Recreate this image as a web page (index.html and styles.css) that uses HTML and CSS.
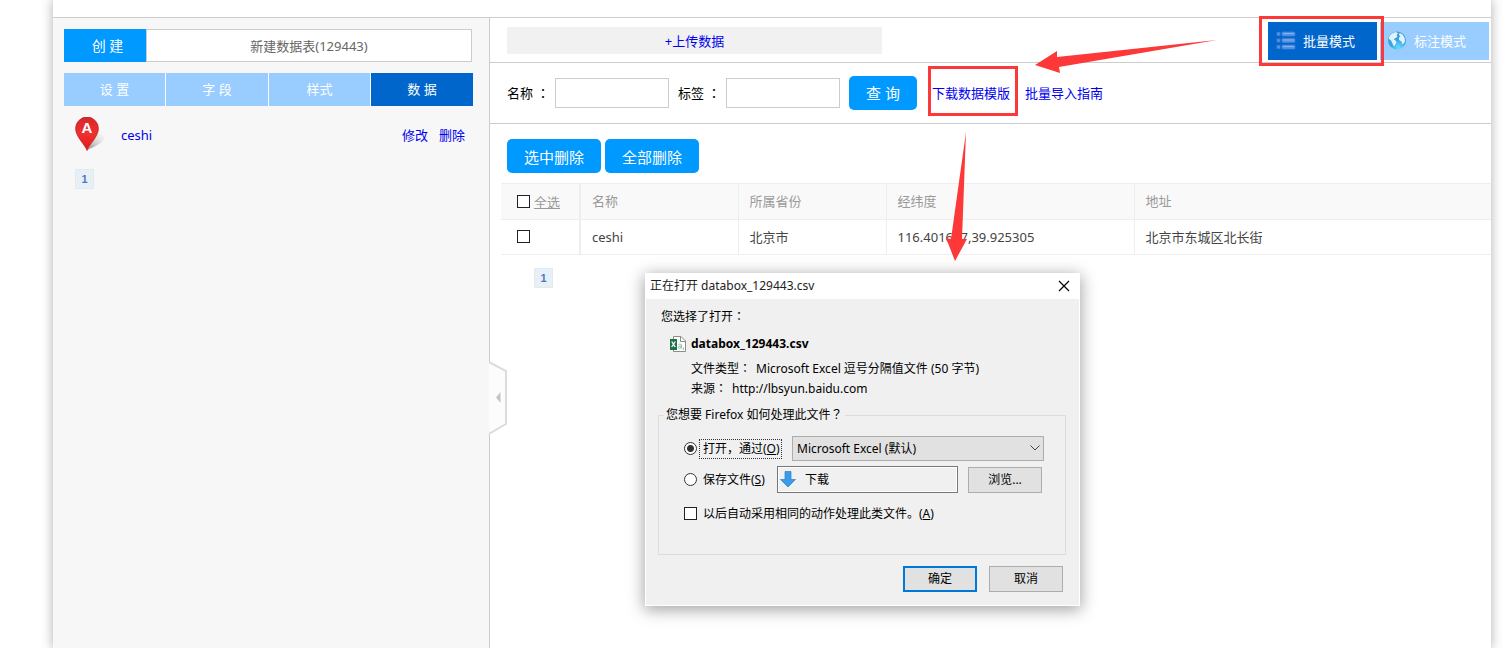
FILE: index.html
```html
<!DOCTYPE html>
<html lang="zh-CN">
<head>
<meta charset="utf-8">
<title>数据管理</title>
<link rel="stylesheet" href="styles.css">
</head>
<body>
<div class="page">
  <aside class="sidebar">
    <div class="create-row">
      <button class="create" type="button">创 建</button>
      <button class="table-name" type="button">新建数据表(129443)</button>
    </div>
    <nav class="tabs">
      <button class="tab" type="button">设 置</button>
      <button class="tab" type="button">字 段</button>
      <button class="tab" type="button">样式</button>
      <button class="tab active" type="button">数 据</button>
    </nav>
    <div class="poi">
      <svg class="marker" width="32" height="36" viewBox="0 0 32 36">
        <defs>
          <linearGradient id="pin" x1="0" y1="0" x2="0" y2="1"><stop offset="0" stop-color="#d8262a"/><stop offset=".5" stop-color="#f03030"/><stop offset="1" stop-color="#e01818"/></linearGradient>
          <linearGradient id="shade" x1="0" y1="1" x2="1" y2="0"><stop offset="0" stop-color="#888"/><stop offset="1" stop-color="#eee" stop-opacity=".2"/></linearGradient>
        </defs>
        <path d="M12 33 L23 17 Q29 17 29 22 Q27 27 12 33Z" fill="url(#shade)"/>
        <path d="M12 33.500C10.500 28 .6 20 .6 11.500a11.400 11.400 0 0 1 22.800 0C23.400 20 13.500 28 12 33.500Z" fill="url(#pin)" stroke="#b81c1c" stroke-width=".7"/>
        <text class="marker-letter" x="12" y="16" text-anchor="middle">A</text>
      </svg>
      <a class="poi-name" href="#">ceshi</a>
      <a href="#">修改</a>
      <a href="#">删除</a>
    </div>
    <a class="pager" href="#">1</a>
  </aside>

  <main class="main">
    <button class="handle" type="button" aria-label="收起">
      <svg width="18" height="76" viewBox="0 0 18 76"><path d="M0 2 L17 11 V64 L0 74" fill="#fcfcfc" stroke="#dcdcdc" stroke-width="2"/><path d="M11.500 32V43L7 37.500Z" fill="#c4c4c4"/></svg>
    </button>

    <header class="topbar">
      <a class="upload" href="#">+上传数据</a>
      <div class="modes">
        <button class="mode current" type="button">
          <svg width="20" height="20" viewBox="0 0 20 20">
            <g fill="#5795e4" stroke="#3f80d6" stroke-width=".8"><rect x="1" y="1.500" width="3" height="3"/><rect x="1" y="8" width="3" height="3"/><rect x="1" y="14.500" width="3" height="3"/><rect x="6" y="1" width="13" height="4" rx="1"/><rect x="6" y="7.500" width="13" height="4" rx="1"/><rect x="6" y="14" width="13" height="4" rx="1"/></g>
            <path d="M7 2.500H18M7 9H18M7 15.500H18" stroke="#7db2f0"/>
          </svg>
          批量模式
          <span class="mark mode-mark"></span>
        </button>
        <button class="mode" type="button">
          <svg width="20" height="20" viewBox="0 0 20 20">
            <defs><radialGradient id="globe" cx=".6" cy=".9" r=".9"><stop offset="0" stop-color="#6adcff"/><stop offset=".5" stop-color="#35a5e0"/><stop offset="1" stop-color="#4a9bd2"/></radialGradient></defs>
            <circle cx="10" cy="9.500" r="9" fill="url(#globe)"/>
            <path d="M2 6Q4 2 9 1L11 2.500L9.500 4L10.500 5.500L8 7.500L6.500 8L9 10L9.500 11.500L8 14L7 15.500L5.500 12.500L4 9.500L2 8Z M12.500 2L15.500 3.500Q18.500 7 18 10.500L16.500 12.500L15.500 13.500L14.500 10.500L12 9L12 6.500L13.500 5.500L12 4Z" fill="#e2f3fd"/>
          </svg>
          标注模式
        </button>
      </div>
    </header>

    <form class="search">
      <label for="name">名称 <span class="colon" lang="zh-TW">：</span></label>
      <input id="name" class="field" type="text">
      <label for="tag">标签 <span class="colon" lang="zh-TW">：</span></label>
      <input id="tag" class="field" type="text">
      <button class="btn query" type="button">查 询</button>
      <a class="template" href="#">下载数据模版<span class="mark link-mark"></span></a>
      <a href="#">批量导入指南</a>
    </form>

    <div class="actions">
      <button class="btn" type="button">选中删除</button>
      <button class="btn" type="button">全部删除</button>
    </div>

    <table class="grid">
      <colgroup><col class="c-check"><col class="c-name"><col class="c-prov"><col class="c-coord"><col></colgroup>
      <thead>
        <tr><th><label class="all"><input class="check" type="checkbox"><u>全选</u></label></th><th>名称</th><th>所属省份</th><th>经纬度</th><th>地址</th></tr>
      </thead>
      <tbody>
        <tr><td><input class="check" type="checkbox" aria-label="选择 ceshi"></td><td>ceshi</td><td>北京市</td><td>116.401677,39.925305</td><td>北京市东城区北长街</td></tr>
      </tbody>
    </table>
    <a class="pager grid-pager" href="#">1</a>
  </main>

  <section class="dialog" role="dialog" aria-labelledby="dialog-title">
    <div class="titlebar">
      <span id="dialog-title">正在打开 databox_129443.csv</span>
      <button class="close" type="button" aria-label="关闭"><svg width="12" height="12" viewBox="0 0 12 12"><path d="M1 1L11 11M11 1L1 11" stroke="#000" stroke-width="1.200"/></svg></button>
    </div>
    <div class="dialog-body">
      <p class="intro">您选择了打开<span class="colon" lang="zh-TW">：</span></p>
      <div class="file">
        <svg width="16" height="16" viewBox="0 0 16 16">
          <path d="M3.500.5H11L15.500 5V15.500H3.500Z" fill="#fff" stroke="#8c8c8c"/><path d="M10.500.5V5.500H15.500" fill="none" stroke="#8c8c8c"/>
          <rect y="3" width="7" height="11" fill="#1e7145"/><path d="M1.700 5.500L5.300 11M5.300 5.500L1.700 11" stroke="#fff" stroke-width="1.300"/>
          <path d="M8.500 8.500Q11.500 7 11.500 10V12.500M11.500 10Q8 10 8.300 11.500Q9 13.300 11.500 11.500M13.500 11.500V13L12.800 14" fill="none" stroke="#8abf9e"/>
        </svg>
        <strong>databox_129443.csv</strong>
      </div>
      <dl class="facts">
        <div><dt>文件类型<span class="colon" lang="zh-TW">：</span></dt><dd>Microsoft Excel 逗号分隔值文件 (50 字节)</dd></div>
        <div><dt>来源<span class="colon" lang="zh-TW">：</span></dt><dd>http://lbsyun.baidu.com</dd></div>
      </dl>
      <fieldset class="choices">
        <legend>您想要 Firefox 如何处理此文件<span class="colon" lang="zh-TW">？</span></legend>
        <div class="choice">
          <input class="radio" id="open" type="radio" name="act" checked>
          <label class="focus" for="open">打开，通过(<u>O</u>)</label>
          <span class="select-wrap">
            <select class="app" aria-label="打开程序"><option>Microsoft Excel (默认)</option></select>
            <svg class="chevron" width="10" height="6" viewBox="0 0 10 6"><path d="M.5.5L5 5L9.500.5" fill="none" stroke="#444"/></svg>
          </span>
        </div>
        <div class="choice">
          <input class="radio" id="save" type="radio" name="act">
          <label class="save-label" for="save">保存文件(<u>S</u>)</label>
          <span class="folder">
            <svg width="16" height="17" viewBox="0 0 16 17"><path d="M5 .5H11V8.500H15.500L8 16L.5 8.500H5Z" fill="#3a9bea" stroke="#2a7fc4" stroke-width=".7"/></svg>
            下载
          </span>
          <button class="sys browse" type="button">浏览...</button>
        </div>
        <div class="choice">
          <input class="check" id="auto" type="checkbox">
          <label class="auto-label" for="auto">以后自动采用相同的动作处理此类文件。(<u>A</u>)</label>
        </div>
      </fieldset>
      <div class="dialog-actions">
        <button class="sys default" type="button">确定</button>
        <button class="sys" type="button">取消</button>
      </div>
    </div>
  </section>
</div>
<svg class="arrows" width="1240" height="280" viewBox="0 0 1240 280">
  <path d="M1217 40L1057 57V51L1035 65L1060 73L1059 67Z M966 132L951 239L946 238L955 261L967 239H962Z" fill="#fc3838"/>
</svg>
</body>
</html>
```
FILE: styles.css
```css
* { box-sizing: border-box; }
body {
  margin: 0;
  overflow: hidden;
  background: #fff;
  color: #000;
  font: 13px/20px "Noto Sans", "Noto Sans CJK SC", sans-serif;
}
button, input, select { font: inherit; color: inherit; margin: 0; border-radius: 0; }
button { padding: 0; border: 0; white-space: nowrap; }
a { color: #00e; text-decoration: none; }
svg { flex: none; display: block; }
.colon { font-family: "Noto Sans CJK TC", sans-serif; line-height: 1; }

.page {
  display: flex;
  min-height: 100vh;
  margin: 0 18px 0 53px;
  padding-top: 17px;
  background: #fff;
  box-shadow: 0 0 10px 1px #bbb;
}

/* sidebar */
.sidebar {
  flex: none;
  width: 437px;
  padding: 11px 16px 0 11px;
  background: #f7f7f7;
  border-top: 1px solid #ccc;
  border-right: 1px solid #ccc;
}
.create-row { display: flex; height: 33px; margin-right: 1px; }
.create { width: 82px; padding-left: 5px; background: #09f; color: #fff; font-size: 14px; }
.table-name { flex: 1; padding-top: 1px; background: #fff; border: 1px solid #ccc; color: #666; }
.tabs { display: grid; grid-template-columns: 101px 102px 101px 1fr; gap: 1px; height: 33px; margin-top: 11px; background: #fff; }
.tab { padding-bottom: 2px; background: #9cf; color: #fff; }
.tab.active { background: #06c; }
.poi { display: flex; align-items: center; gap: 11px; margin: 10px 8px 16px 11px; height: 37px; }
.poi-name { flex: 1; margin-left: 3px; }
.marker-letter { font: bold 15px "Liberation Sans", sans-serif; fill: #fff; }
.pager {
  display: block;
  width: 19px;
  height: 20px;
  margin-left: 11px;
  background: #e8f0f7;
  border: 1px solid #e2e9ef;
  color: #5176c0;
  font: bold 11px/18px "Liberation Sans", sans-serif;
  text-align: center;
}

/* main column */
.main { position: relative; flex: 1; min-width: 0; border-top: 1px solid #ccc; }
.handle { position: absolute; left: -1px; top: 342px; background: none; }
.topbar { display: flex; justify-content: space-between; height: 45px; padding: 4px 2px 2px 17px; border-bottom: 1px solid #ccc; }
.upload { width: 375px; height: 27px; margin-top: 5px; background: #f1f1f1; line-height: 28px; text-align: center; }
.modes { display: flex; gap: 3px; }
.mode { position: relative; display: flex; align-items: center; gap: 7px; width: 109px; height: 38px; padding-left: 8px; background: #9cf; color: #fff; }
.mode + .mode { padding-left: 7px; }
.mode.current { background: #06c; }
.mark { position: absolute; border: 3px solid #fc3838; z-index: 1; }
.mode-mark { inset: -6px -7px -6px -9px; }
.link-mark { inset: -17px -8px -13px -4px; }
.search { display: flex; align-items: center; height: 61px; padding-left: 17px; border-bottom: 1px solid #ccc; }
.search label { width: 48px; white-space: nowrap; }
.field { width: 114px; height: 30px; margin-right: 9px; border: 1px solid #ccc; background: #fff; }
.btn { height: 34px; padding: 2px 0 0; width: 94px; border-radius: 5px; background: #09f; color: #fff; font-size: 15px; }
.query { width: 68px; padding: 0; margin-right: 15px; }
.template { position: relative; margin-right: 15px; }
.actions { display: flex; gap: 4px; padding: 15px 17px 10px; }

.grid { width: calc(100% - 11px); margin-left: 11px; border-collapse: collapse; table-layout: fixed; }
.grid th, .grid td { height: 35px; padding: 0 11px 1px; border: 1px solid #eee; border-width: 1px 0 1px 1px; text-align: left; font-weight: 400; color: #444; }
.grid th { height: 36px; background: #f9f9f9; color: #999; }
.grid th:first-child, .grid td:first-child { padding-left: 16px; border-left: 0; border-right: 2px solid #eee; }
.c-check { width: 79px; }
.c-name { width: 158px; }
.c-prov { width: 148px; }
.c-coord { width: 248px; }
.all { display: flex; align-items: center; gap: 4px; }
.all u { padding-top: 2px; }
.check { appearance: none; flex: none; display: block; width: 13px; height: 13px; border: 1px solid #222; background: #fff; }
.grid-pager { margin: 13px 0 0 44px; }

/* download dialog */
.dialog {
  position: absolute;
  left: 645px;
  top: 273px;
  width: 435px;
  border: 1px solid #fff;
  background: #f0f0f0;
  box-shadow: 0 3px 15px 1px rgba(0, 0, 0, .36);
  font-size: 12px;
  line-height: 18px;
}
.titlebar { display: flex; align-items: center; justify-content: space-between; height: 25px; padding: 0 9px 1px 4px; background: #fff; color: #222; }
.close { background: none; }
.dialog-body { padding: 9px 13px 13px 12px; }
.intro { margin: 0 0 9px 3px; }
.file { display: flex; align-items: center; gap: 5px; margin-left: 12px; }
.facts { margin: 6px 0 7px 33px; }
.facts div { display: flex; gap: 5px; height: 20px; align-items: center; }
.facts dd { margin: 0; }
.choices { margin: 0; padding: 11px 21px 26px 25px; border: 1px solid #dcdcdc; height: 149px; min-width: 0; }
.choices legend { margin-left: -20px; padding: 0 2px; }
.choice { display: flex; align-items: center; height: 27px; margin-bottom: 4px; white-space: nowrap; }
.radio { appearance: none; flex: none; width: 13px; height: 13px; border: 1px solid #333; border-radius: 50%; background: #fff; }
.radio:checked { background: radial-gradient(circle, #333 0 3px, #fff 4px); }
.focus { width: 83px; margin: 0 10px 0 2px; padding: 0 3px; border: 1px dotted #333; }
.select-wrap { position: relative; flex: 1; }
.app { appearance: none; display: block; width: 100%; height: 25px; padding: 0 4px; border: 1px solid #adadad; background: #e1e1e1; }
.chevron { position: absolute; right: 4px; top: 9px; pointer-events: none; }
.save-label { width: 69px; margin: 0 5px 0 6px; }
.folder { display: flex; align-items: center; gap: 9px; width: 181px; height: 27px; padding-left: 2px; border: 1px solid #777; outline: 1px solid #fff; outline-offset: -2px; }
.sys { width: 74px; height: 26px; border: 1px solid #adadad; background: #e1e1e1; }
.browse { margin-left: 10px; }
.auto-label { margin: 6px 0 0 6px; }
.choice .check { margin-top: 6px; }
.dialog-actions { display: flex; justify-content: flex-end; gap: 12px; margin: 11px 3px 0 0; }
.default { border: 2px solid #0078d7; }

.arrows { position: absolute; left: 0; top: 0; pointer-events: none; }
```
